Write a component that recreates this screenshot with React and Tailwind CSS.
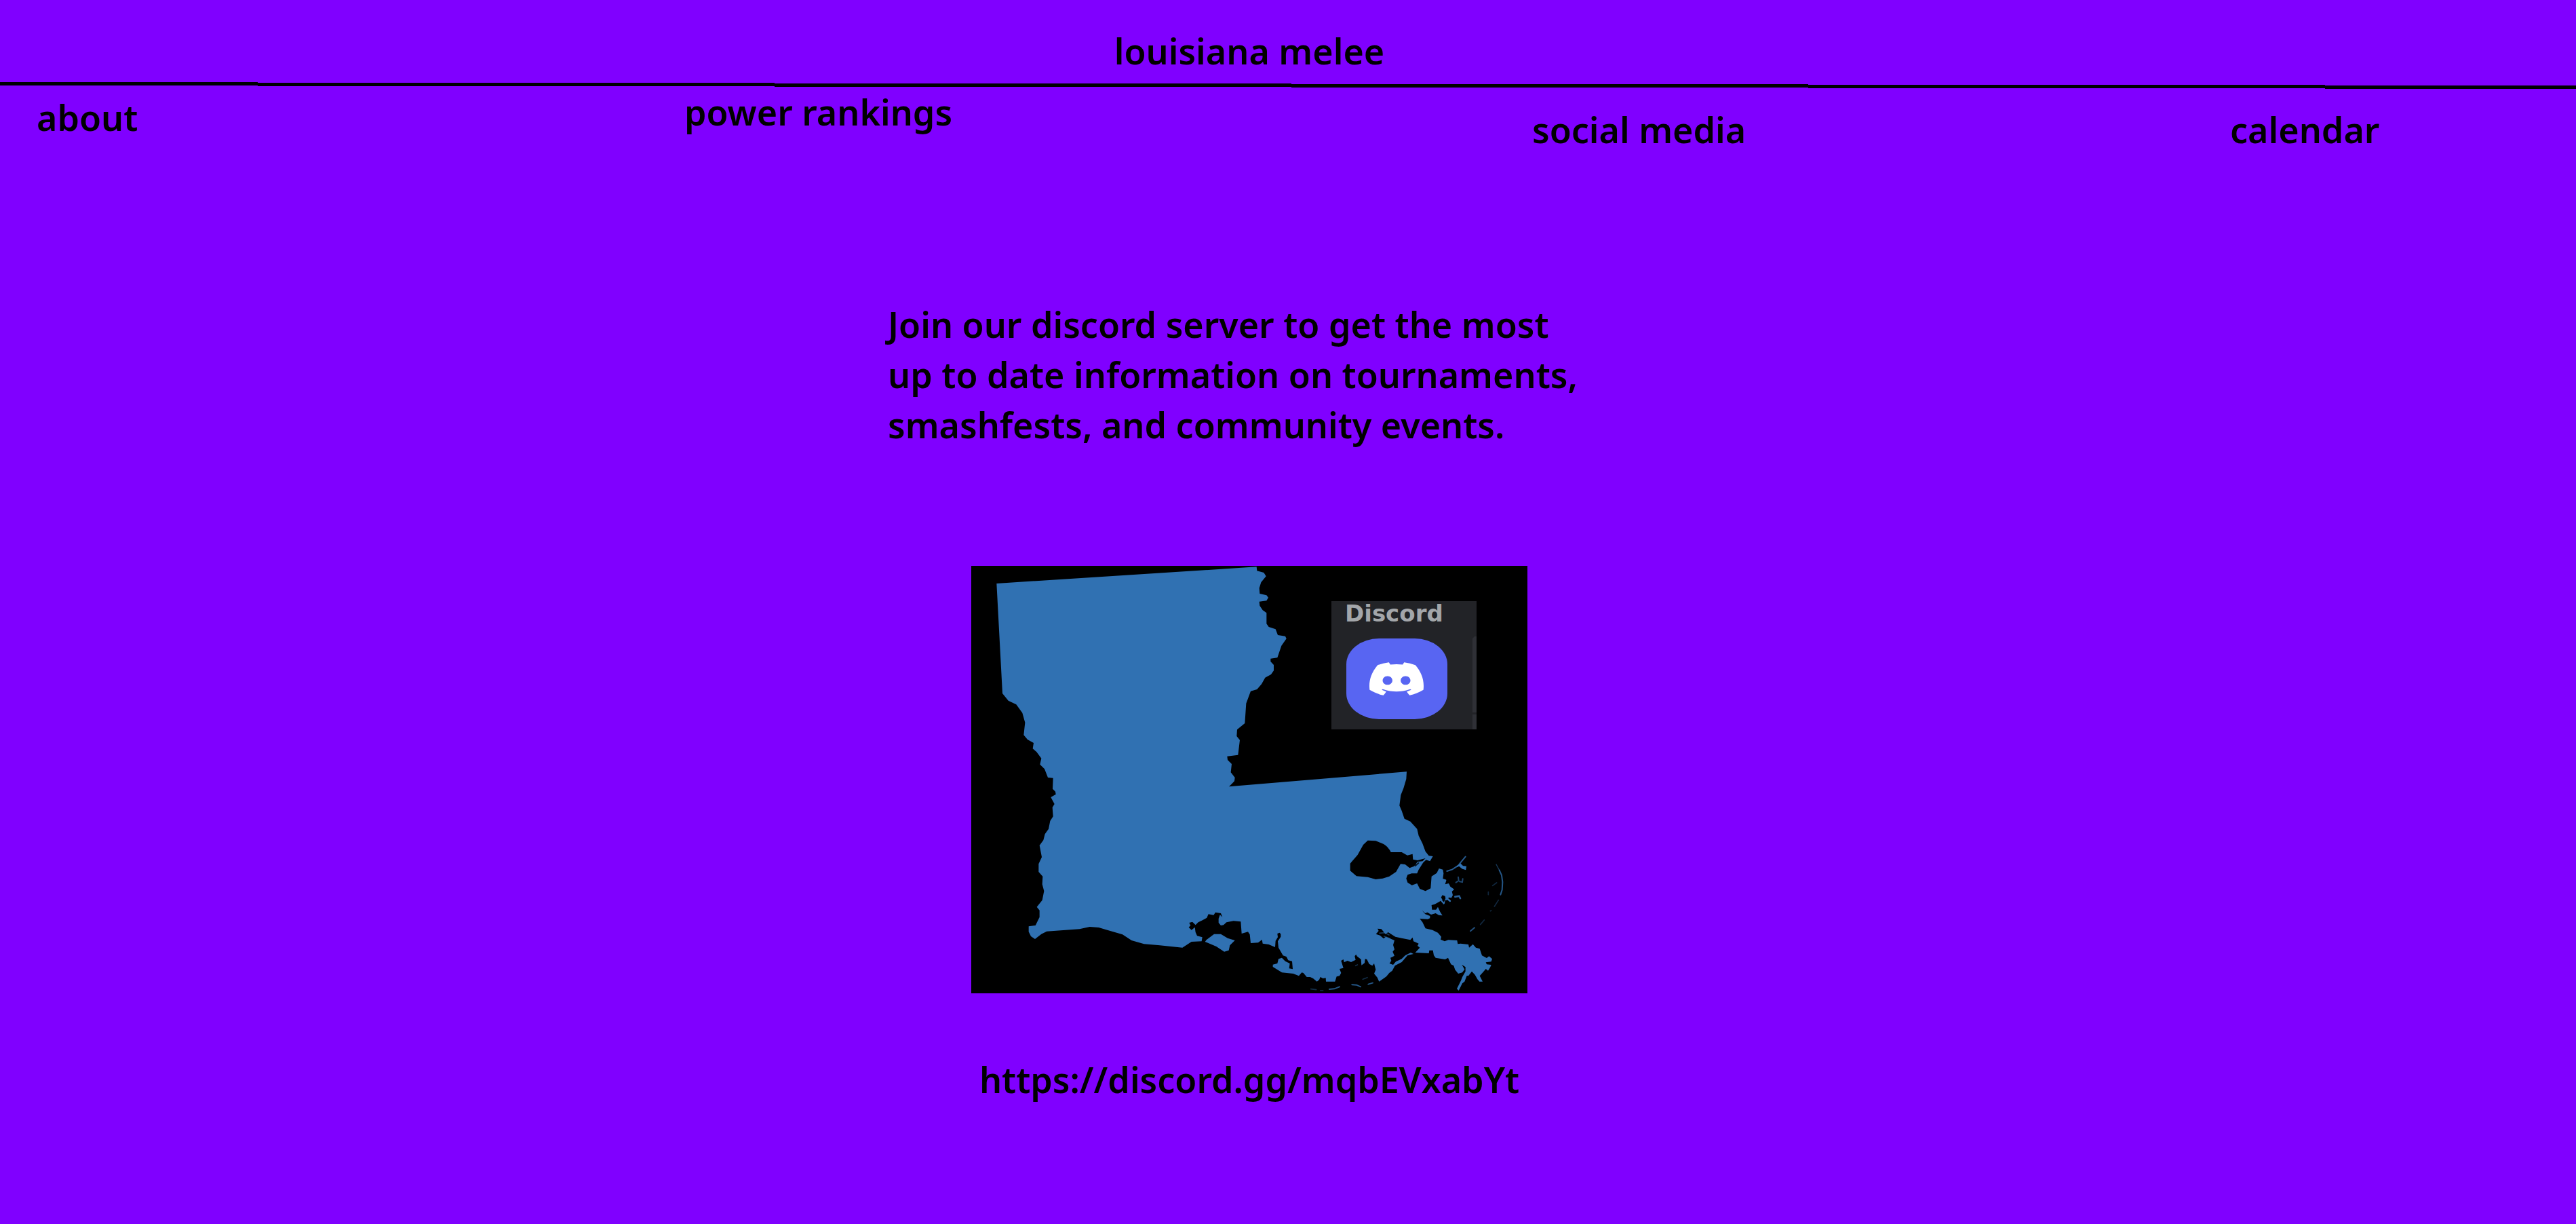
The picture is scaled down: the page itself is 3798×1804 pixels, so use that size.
import React from "react";

const INVITE_URL = "https://discord.gg/mqbEVxabYt";

const NAV_ITEMS = [
  { label: "about", href: "#about", className: "mt-3" },
  { label: "power rankings", href: "#power-rankings", className: "mt-1" },
  { label: "social media", href: "#social-media", className: "mt-[30px]" },
  { label: "calendar", href: "#calendar", className: "mt-[30px]" },
];

const STATE_OUTLINE =
  "M112 78L1262 4L1264 22L1294 30L1304 46L1282 73L1274 98L1276 123L1306 130L1314 140L1306 154L1274 158L1276 176L1289 196L1306 208V256L1316 270L1346 280L1356 306L1389 311L1394 322L1372 353L1354 406L1324 410V423L1338 438V463L1326 480L1300 494L1284 523L1264 546L1236 554L1216 608L1210 696L1176 724L1174 753L1188 770L1180 836L1132 842L1134 858L1152 876L1148 913L1166 936L1164 952L1148 968L1140 976" +
  "L1926 910L1924 943L1912 983L1900 1013L1894 1060L1904 1083L1916 1118L1942 1130L1972 1163L1979 1193L1996 1228L2009 1263L2024 1282L2042 1284L2029 1306L2012 1300L1999 1312L1979 1343L1972 1360L1948 1360L1930 1366L1924 1382L1930 1400L1949 1412L1972 1404L1984 1428L2009 1438L2032 1426L2036 1373L2059 1358L2069 1338L2086 1343L2089 1360L2086 1383L2102 1388L2096 1408L2112 1404L2119 1418L2136 1430L2126 1440L2130 1456L2124 1468L2112 1466L2104 1478L2096 1478L2094 1492L2086 1498L2098 1470L2096 1460L2084 1456L2078 1466L2084 1476L2069 1486L2050 1496L2036 1500L2038 1520L2056 1520L2064 1508L2074 1530L2084 1546L2068 1544L2054 1536L2034 1542L2018 1532L2008 1536L1994 1523L2008 1540L2029 1548V1558L2019 1562L1984 1560L1996 1576L2009 1603L2040 1610L2064 1622L2079 1640L2076 1652L2094 1660L2110 1654L2149 1656L2152 1672L2164 1670L2199 1674L2202 1688L2219 1673L2232 1688L2249 1693L2259 1723L2280 1734L2290 1726L2304 1738L2300 1750L2276 1753L2280 1762L2300 1764L2296 1774L2286 1790L2276 1782L2264 1796L2249 1813L2262 1838L2248 1838L2239 1828L2228 1808L2214 1793L2199 1813L2192 1812L2182 1838L2172 1846L2156 1878L2148 1870L2166 1834L2172 1818L2186 1793L2186 1774L2170 1763L2182 1784L2172 1798L2154 1803L2140 1786L2134 1768L2122 1762L2109 1733L2096 1740L2054 1733L2046 1722L2042 1700L2026 1700L2024 1713L1964 1710L1984 1688L1974 1680L1979 1670L1956 1660L1952 1643L1942 1654L1904 1646L1876 1640L1844 1620L1832 1628L1814 1606L1797 1604L1802 1614L1790 1628L1808 1634L1824 1648L1834 1640L1858 1650L1872 1656L1866 1676L1872 1696L1864 1706L1872 1724L1854 1733L1858 1746L1850 1758L1866 1764L1878 1750L1904 1738L1920 1722L1944 1710L1956 1716L1930 1722L1904 1752L1874 1768L1862 1790L1849 1800L1836 1816L1804 1838L1796 1820L1782 1803L1789 1786L1782 1758L1774 1768L1760 1760L1750 1740L1742 1738L1740 1756L1726 1766L1724 1740L1706 1726L1702 1718L1696 1726L1700 1742L1680 1752L1664 1746L1649 1753L1646 1740L1636 1746L1646 1778L1629 1782L1636 1800L1629 1813L1616 1816L1609 1838L1569 1838L1568 1822L1556 1824L1544 1818L1539 1830L1529 1838L1512 1824L1499 1818L1484 1818L1469 1800" +
  "L1462 1798L1449 1813L1424 1803L1374 1798L1334 1773V1763L1354 1758L1359 1738L1374 1733L1389 1748L1409 1758L1406 1780L1422 1783L1419 1748L1402 1744L1394 1728L1379 1723L1359 1688L1356 1660L1369 1640V1628L1364 1622L1354 1626L1356 1642L1346 1658L1344 1686L1316 1674L1289 1670L1286 1653L1269 1666L1236 1668L1232 1630L1224 1618L1196 1626L1192 1573L1160 1570L1129 1576L1116 1588L1104 1590L1094 1578V1560L1100 1543L1111 1553L1104 1536L1080 1532L1072 1544L1049 1540L1042 1556L1020 1568L1004 1576L992 1588L978 1574L964 1578L970 1590L962 1598L974 1610L989 1598L992 1620L999 1636L1022 1642L1019 1660L974 1662L934 1688L834 1678L764 1672L709 1656L669 1630L594 1608L564 1599L524 1596L479 1606L334 1616L310 1628L282 1650L264 1638L254 1618V1594L284 1590L302 1553V1523L290 1508L314 1478L322 1438L314 1408L316 1373L298 1353V1318L312 1288L302 1236L319 1213L326 1186L342 1163L349 1128L362 1108L359 1068L368 1053L352 1023L374 1010L372 998L360 986L362 938L339 936L324 898L304 878L310 851L289 823L272 808L276 783L249 768L232 748L238 693L226 650L199 613L164 596L138 564Z";

const LAKE =
  "M1754 1214L1789 1216L1824 1230Q1846 1244 1856 1266L1904 1266L1929 1280L1952 1274L1954 1298L1974 1302L2009 1293L1996 1306L1974 1308L1959 1328L1939 1336L1919 1320L1899 1318L1879 1353L1849 1373L1820 1382L1789 1386L1754 1376L1704 1372L1676 1348V1316L1709 1278L1734 1233Z";

const BAY_ISLAND =
  "M1034 1662L1040 1654L1074 1628H1104L1134 1646L1166 1656L1144 1678L1139 1700L1119 1706L1084 1683Z";

const DISCORD_MARK =
  "M20.317 4.3698a19.7913 19.7913 0 00-4.8851-1.5152.0741.0741 0 00-.0785.0371c-.211.3753-.4447.8648-.6083 1.2495-1.8447-.2762-3.68-.2762-5.4868 0-.1636-.3933-.4058-.8742-.6177-1.2495a.077.077 0 00-.0785-.037 19.7363 19.7363 0 00-4.8852 1.515.0699.0699 0 00-.0321.0277C.5334 9.0458-.319 13.5799.0992 18.0578a.0824.0824 0 00.0312.0561c2.0528 1.5076 4.0413 2.4228 5.9929 3.0294a.0777.0777 0 00.0842-.0276c.4616-.6304.8731-1.2952 1.226-1.9942a.076.076 0 00-.0416-.1057c-.6528-.2476-1.2743-.5495-1.8722-.8923a.077.077 0 01-.0076-.1277c.1258-.0943.2517-.1923.3718-.2914a.0743.0743 0 01.0776-.0105c3.9278 1.7933 8.18 1.7933 12.0614 0a.0739.0739 0 01.0785.0095c.1202.099.246.1981.3728.2924a.077.077 0 01-.0066.1276 12.2986 12.2986 0 01-1.873.8914.0766.0766 0 00-.0407.1067c.3604.698.7719 1.3628 1.225 1.9932a.076.076 0 00.0842.0286c1.961-.6067 3.9495-1.5219 6.0023-3.0294a.077.077 0 00.0313-.0552c.5004-5.177-.8382-9.6739-3.5485-13.6604a.061.061 0 00-.0312-.0286zM8.02 15.3312c-1.1825 0-2.1569-1.0857-2.1569-2.419 0-1.3332.9555-2.4189 2.157-2.4189 1.2108 0 2.1757 1.0952 2.1568 2.419 0 1.3332-.9555 2.4189-2.1569 2.4189zm7.9748 0c-1.1825 0-2.1569-1.0857-2.1569-2.4189 0-1.3332.9554-2.4189 2.1569-2.4189 1.2108 0 2.1757 1.0952 2.1568 2.4189 0 1.3332-.946 2.4189-2.1568 2.4189Z";

function HeaderRule() {
  return (
    <svg
      className="mt-[9px] block h-[10px] w-full"
      viewBox="0 0 3798 10"
      preserveAspectRatio="none"
      shapeRendering="crispEdges"
      aria-hidden="true"
    >
      <path
        d="M0 0H380V1H1142V2H1904V3H2666V4H3428V5H3798V10H3428V9H2666V8H1904V7H1142V6H380V5H0Z"
        fill="#000"
      />
    </svg>
  );
}

function CoastalIslands() {
  return (
    <g transform="translate(1464 798)" fill="none" stroke="#3071b2" strokeLinecap="round">
      <path d="M858 522L872 548" strokeWidth="4" opacity=".5" />
      <path d="M872 548L882 570L886 600L884 635L877 656" strokeWidth="6" opacity=".75" />
      <path d="M842 616L860 603M850 708L868 680M788 788L805 768M832 728L836 726M823 656V644" strokeWidth="5" opacity=".35" />
      <path d="M744 817L762 802" strokeWidth="6" opacity=".7" />
      <path d="M640 552L664 544L690 527L702 512L722 488" strokeWidth="6" opacity=".8" />
      <path d="M684 532L700 520L710 530L724 532L722 544L708 540L694 528Z" fill="#3071b2" strokeWidth="4" />
      <path d="M680 602L692 594L690 578M696 598L708 600L710 586" strokeWidth="6" opacity=".6" />
      <path d="M676 665L694 662L699 672" strokeWidth="8" opacity=".85" />
      <path d="M612 678L626 694M640 672L654 684" strokeWidth="7" />
      <path d="M120 1074L142 1072L165 1063M220 1054L240 1055L258 1063M292 1052L312 1046" strokeWidth="6" opacity=".75" />
      <path d="M38 1073L62 1076M80 1080H92M268 1030L288 1022M236 970L244 966" strokeWidth="5" opacity=".4" />
      <path d="M342 826L366 824L384 834M362 840L388 850" strokeWidth="5" opacity=".5" />
      <path d="M500 528L514 516M492 508L500 520M640 590L650 604M612 690L604 700" stroke="#000" strokeWidth="6" opacity=".8" />
    </g>
  );
}

function DiscordTile() {
  return (
    <g>
      <rect x="531" y="52" width="214" height="189" fill="#222327" />
      <path d="M739 107L742 104H745V216H739ZM739 219H745V241H739Z" fill="#2f3036" />
      <text
        x="551"
        y="82"
        fill="#a3a6aa"
        className="font-['DejaVu_Sans'] text-[34px] font-bold"
      >
        Discord
      </text>
      <rect x="553" y="107" width="149" height="119" rx="48" ry="38" fill="#5865f2" />
      <svg x="587" y="142" width="80" height="49" viewBox="0 2.8 24 18.4" preserveAspectRatio="none">
        <path d={DISCORD_MARK} fill="#fff" />
      </svg>
    </g>
  );
}

function LouisianaMap() {
  return (
    <svg
      className="block h-auto w-[820px] max-w-full bg-black"
      viewBox="0 0 820 630"
      role="img"
      aria-label="Map of Louisiana with the Discord logo"
    >
      <g transform="scale(.33333)">
        <path d={STATE_OUTLINE} fill="#3071b2" />
        <path d={LAKE} fill="#000" />
        <path d={BAY_ISLAND} fill="#3071b2" />
        <CoastalIslands />
      </g>
      <DiscordTile />
    </svg>
  );
}

export default function App() {
  return (
    <div className="min-h-screen bg-[#8000ff] font-['Noto_Sans',sans-serif] text-[52px] leading-[74px] font-semibold text-black">
      <header className="pt-[38px]">
        <h1 className="pr-[3%] text-center">louisiana melee</h1>
        <HeaderRule />
        <nav
          aria-label="Main"
          className="grid grid-cols-[955fr_1250fr_1029fr_510fr] items-start pl-[54px] leading-[60px]"
        >
          {NAV_ITEMS.map((item) => (
            <a key={item.label} href={item.href} className={item.className}>
              {item.label}
            </a>
          ))}
        </nav>
      </header>

      <main className="flex flex-col items-center pt-[220px] pr-[3%]">
        <p className="w-[1066px] max-w-full pr-6">
          Join our discord server to get the most up to date information on
          tournaments, smashfests, and community events.
        </p>
        <a href={INVITE_URL} className="mt-[171px] block max-w-full">
          <LouisianaMap />
        </a>
        <a href={INVITE_URL} className="mt-[90px]">
          {INVITE_URL}
        </a>
      </main>
    </div>
  );
}
